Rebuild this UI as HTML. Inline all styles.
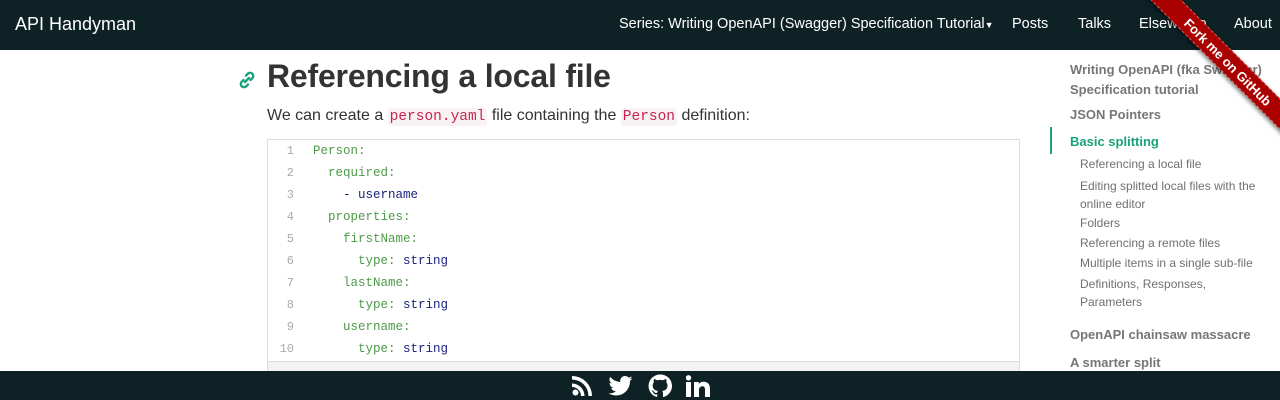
<!DOCTYPE html>
<html><head><meta charset="utf-8"><style>
*{margin:0;padding:0;box-sizing:border-box}
body{width:1280px;height:400px;overflow:hidden;background:#fff;font-family:"Liberation Sans",sans-serif;position:relative}
.nav{position:absolute;left:0;top:0;width:1280px;height:50px;background:#0e2226;color:#fff}
.nav span{position:absolute;top:16px;font-size:15px}
.brand{left:15px;font-size:18px!important;top:14px!important}
.a{position:absolute;white-space:nowrap}
h1{position:absolute;left:267px;top:58px;font-size:32px;font-weight:bold;color:#333;letter-spacing:-0.2px}
.p{left:267px;top:107px;font-size:16px;color:#333}
code{font-family:"Liberation Mono",monospace;color:#c7254e;background:#f9f2f4;font-size:14.5px;padding:1px 2px;border-radius:3px}
.code{position:absolute;left:267px;top:139px;width:753px;height:232px;border:1px solid #ddd;border-bottom:none;background:#fff}
.code .bar{position:absolute;left:0;bottom:0;width:100%;height:10px;background:#f3f3f3;border-top:1px solid #ddd}
.ln{position:absolute;left:0;width:26px;text-align:right;font-family:"Liberation Mono",monospace;font-size:12px;color:#aaa}
.cl{position:absolute;left:45px;font-family:"Liberation Mono",monospace;font-size:12.5px;white-space:pre;color:#1a237e}
.k{color:#4f9a4a}
.side{font-size:13px;color:#777}
.side .m{font-weight:bold;color:#767676}
.side .s{font-size:12px;color:#707070}
.foot{position:absolute;left:0;top:371px;width:1280px;height:29px;background:#0e2226}
.rib{position:absolute;left:1098px;top:51px;width:260px;height:22px;background:#a00;transform:rotate(45deg);color:#fff;font-size:13px;font-weight:bold;text-align:center;line-height:22px;border-top:1px dashed rgba(255,255,255,.4);border-bottom:1px dashed rgba(255,255,255,.4);box-shadow:0 2px 4px rgba(0,0,0,.5)}
</style></head><body>
<div class="nav">
<span class="brand">API Handyman</span>
<span style="left:619px;font-size:14.5px">Series: Writing OpenAPI (Swagger) Specification Tutorial<span style="position:static;font-size:9px">▼</span></span>
<span style="left:1012px;font-size:14.5px">Posts</span>
<span style="left:1078px;font-size:14.5px">Talks</span>
<span style="left:1139px;font-size:14.5px">Elsewhere</span>
<span style="left:1234px;font-size:14.5px">About</span>
</div>
<svg class="a" style="left:237px;top:70px" width="20" height="20" viewBox="0 0 20 20"><g fill="none" stroke="#1aa37a" stroke-width="2.4" stroke-linecap="round"><path d="M8 12l4-4"/><path d="M9 5.5l2-2a3.2 3.2 0 0 1 4.5 4.5l-2 2"/><path d="M11 14.5l-2 2a3.2 3.2 0 0 1-4.5-4.5l2-2"/></g></svg>
<h1>Referencing a local file</h1>
<div class="a p">We can create a <code>person.yaml</code> file containing the <code>Person</code> definition:</div>
<div class="code">
<div class="ln" style="top:4px">1</div><div class="cl k" style="top:4px">Person:</div>
<div class="ln" style="top:26px">2</div><div class="cl k" style="top:26px">  required:</div>
<div class="ln" style="top:48px">3</div><div class="cl" style="top:48px">    - username</div>
<div class="ln" style="top:70px">4</div><div class="cl k" style="top:70px">  properties:</div>
<div class="ln" style="top:92px">5</div><div class="cl k" style="top:92px">    firstName:</div>
<div class="ln" style="top:114px">6</div><div class="cl" style="top:114px"><span class="k">      type:</span> string</div>
<div class="ln" style="top:136px">7</div><div class="cl k" style="top:136px">    lastName:</div>
<div class="ln" style="top:158px">8</div><div class="cl" style="top:158px"><span class="k">      type:</span> string</div>
<div class="ln" style="top:180px">9</div><div class="cl k" style="top:180px">    username:</div>
<div class="ln" style="top:202px">10</div><div class="cl" style="top:202px"><span class="k">      type:</span> string</div>
<div class="bar"></div>
</div>
<div class="side">
<div class="a m" style="left:1070px;top:60px;line-height:20px">Writing OpenAPI (fka Swagger)<br>Specification tutorial</div>
<div class="a m" style="left:1070px;top:107px">JSON Pointers</div>
<div class="a" style="left:1050px;top:127px;width:2px;height:27px;background:#1aa37a"></div>
<div class="a m" style="left:1070px;top:134px;color:#1aa37a">Basic splitting</div>
<div class="a s" style="left:1080px;top:157px">Referencing a local file</div>
<div class="a s" style="left:1080px;top:177px;line-height:18px">Editing splitted local files with the<br>online editor</div>
<div class="a s" style="left:1080px;top:216px">Folders</div>
<div class="a s" style="left:1080px;top:236px">Referencing a remote files</div>
<div class="a s" style="left:1080px;top:256px">Multiple items in a single sub-file</div>
<div class="a s" style="left:1080px;top:275px;line-height:18px">Definitions, Responses,<br>Parameters</div>
<div class="a m" style="left:1070px;top:327px">OpenAPI chainsaw massacre</div>
<div class="a m" style="left:1070px;top:355px">A smarter split</div>
</div>
<div class="rib">Fork me on GitHub</div>
<div class="foot">
<svg class="a" style="left:572px;top:5px" width="20" height="20" viewBox="0 0 20 20" fill="#fff"><circle cx="3.5" cy="16.5" r="3"/><path d="M0 7.5a12.5 12.5 0 0 1 12.5 12.5H9A9 9 0 0 0 0 11z"/><path d="M0 0a20 20 0 0 1 20 20h-3.5A16.5 16.5 0 0 0 0 3.5z"/></svg>
<svg class="a" style="left:608px;top:5px" width="25" height="20" viewBox="0 0 24 20" fill="#fff"><path d="M24 2.4a10 10 0 0 1-2.8.8A5 5 0 0 0 23.3.4a10 10 0 0 1-3.1 1.2A4.9 4.9 0 0 0 11.8 6 14 14 0 0 1 1.7.9a4.9 4.9 0 0 0 1.5 6.6 4.9 4.9 0 0 1-2.2-.6 4.9 4.9 0 0 0 4 4.9 5 5 0 0 1-2.2.1 4.9 4.9 0 0 0 4.6 3.4A9.9 9.9 0 0 1 0 17.3 14 14 0 0 0 7.5 19.5c9 0 14-7.5 14-14v-.6A10 10 0 0 0 24 2.4z"/></svg>
<svg class="a" style="left:648px;top:3px" width="24" height="24" viewBox="0 0 24 24" fill="#fff"><path d="M12 .5a11.5 11.5 0 0 0-3.6 22.4c.6.1.8-.3.8-.6v-2c-3.2.7-3.900-1.5-3.9-1.5-.5-1.3-1.3-1.7-1.3-1.7-1-.7.1-.7.1-.7 1.2.1 1.8 1.2 1.8 1.2 1 1.8 2.7 1.3 3.4 1 .1-.8.4-1.300.7-1.6-2.6-.3-5.3-1.3-5.3-5.7 0-1.3.5-2.3 1.2-3.1-.1-.3-.5-1.5.1-3.1 0 0 1-.3 3.2 1.2a11 11 0 0 1 5.8 0c2.2-1.5 3.2-1.2 3.2-1.2.6 1.6.2 2.8.1 3.1.7.8 1.2 1.8 1.2 3.1 0 4.4-2.7 5.4-5.3 5.7.4.4.8 1.1.8 2.2v3.2c0 .3.2.7.8.6A11.5 11.5 0 0 0 12 .5z"/></svg>
<svg class="a" style="left:686px;top:4px" width="24" height="22" viewBox="0 0 24 22" fill="#fff"><rect x="0" y="7" width="5" height="15"/><circle cx="2.5" cy="2.8" r="2.7"/><path d="M8 7h4.8v2.1C13.5 7.8 15.2 6.7 17.6 6.7 22 6.7 24 9.3 24 14v8h-5v-7.3c0-2-.6-3.4-2.5-3.4S13 12.7 13 14.7V22H8z"/></svg>
</div>
</body></html>
